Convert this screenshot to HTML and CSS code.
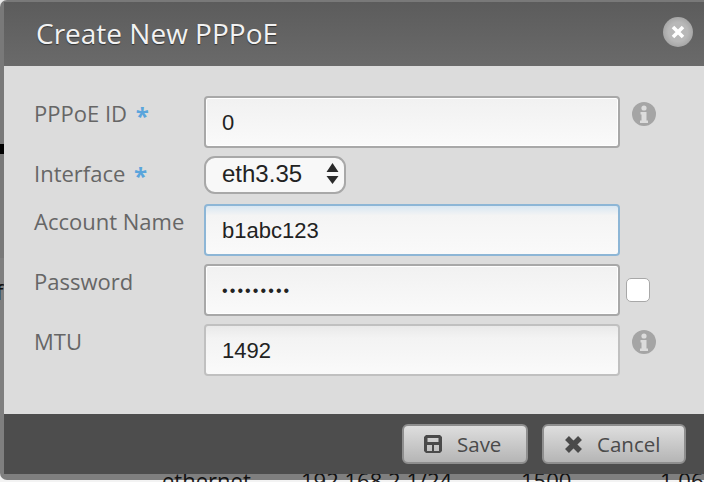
FILE: index.html
```html
<!DOCTYPE html>
<html lang="en">
  <head>
    <meta charset="UTF-8" />
    <meta name="viewport" content="width=device-width, initial-scale=1.0" />
    <title>Create New PPPoE</title>
    <link rel="stylesheet" href="styles.css">
  </head>
  <body>
    <div class="behind-top"></div>
    <div class="left-mark"></div>
    <span class="left-letter">f</span>
    <div class="behind">
      <span class="behind-cell cell-type">ethernet</span>
      <span class="behind-cell cell-ip">192.168.2.1/24</span>
      <span class="behind-cell cell-mtu">1500</span>
      <span class="behind-cell cell-rx">1.06</span>
    </div>
    <div class="dialog">
      <div class="dialog-head">
        <h1>Create New PPPoE</h1>
        <div class="close">
          <svg width="16" height="16" viewBox="0 0 16 16"><path d="M3 3l10 10M13 3L3 13" stroke="#fff" stroke-width="3.6" /></svg>
        </div>
      </div>
      <div class="dialog-body">
        <div class="row row-tall">
          <label>PPPoE ID <b>*</b></label>
          <div class="field">0</div>
          <svg class="info" width="24" height="24" viewBox="0 0 24 24"><circle cx="12" cy="12" r="12" fill="#a5a5a5" /><circle cx="12" cy="6" r="2.6" fill="#dcdcdc" /><path d="M8.500 10h6v8.500h1.500V21H8v-2.500h1.500V12.500h-1z" fill="#dcdcdc" /></svg>
        </div>
        <div class="row row-select">
          <label>Interface <b>*</b></label>
          <div class="select">eth3.35
            <svg width="13" height="22" viewBox="0 0 13 22"><path d="M6.500 0l6 9H.500zM6.500 21l-6-8h12z" fill="#2b2b2b" /></svg>
          </div>
        </div>
        <div class="row row-tall">
          <label>Account Name</label>
          <div class="field focus">b1abc123</div>
        </div>
        <div class="row row-tall">
          <label>Password</label>
          <div class="field dots">•••••••••</div>
          <div class="check"></div>
        </div>
        <div class="row row-tall">
          <label>MTU</label>
          <div class="field faded">1492</div>
          <svg class="info" width="24" height="24" viewBox="0 0 24 24"><circle cx="12" cy="12" r="12" fill="#a5a5a5" /><circle cx="12" cy="6" r="2.6" fill="#dcdcdc" /><path d="M8.500 10h6v8.500h1.500V21H8v-2.500h1.500V12.500h-1z" fill="#dcdcdc" /></svg>
        </div>
      </div>
      <div class="dialog-foot">
        <div class="btn btn-save">
          <svg width="18" height="18" viewBox="0 0 18 18"><path fill-rule="evenodd" d="M2 0h14l2 2v14l-2 2H2l-2-2V2zM3.500 3v4h11V3zM3 10v6h5v-6zM10 10v6h5v-6z" fill="#4a4a4a" /></svg>
          Save
        </div>
        <div class="btn btn-cancel">
          <svg width="19" height="19" viewBox="0 0 19 19"><path d="M3 3l13 13M16 3L3 16" stroke="#4a4a4a" stroke-width="5.500" /></svg>
          Cancel
        </div>
      </div>
    </div>
  </body>
</html>
```

FILE: styles.css
```css
* {
  margin: 0;
  padding: 0;
  box-sizing: border-box;
}
html,
body {
  height: 482px;
  overflow: hidden;
}
body {
  position: relative;
  background: #f3f3f3;
  font-family: "Open Sans", sans-serif;
}
.behind-top {
  height: 258px;
  background: #e8e8e8;
}
.behind {
  position: absolute;
  left: 0;
  right: 0;
  top: 468px;
  height: 14px;
  color: #222;
  font-size: 22px;
  line-height: 24px;
}
.behind-cell {
  position: absolute;
  top: 0;
}
.cell-type {
  left: 162px;
}
.cell-ip {
  left: 301px;
}
.cell-mtu {
  left: 521px;
}
.cell-rx {
  left: 660px;
}
.left-mark {
  position: absolute;
  left: 0;
  top: 144px;
  width: 4px;
  height: 10px;
  background: #000;
}
.left-letter {
  position: absolute;
  left: -4px;
  top: 276px;
  color: #222;
  font-size: 22px;
}
.dialog {
  position: absolute;
  left: 0;
  top: 0;
  width: 712px;
  height: 480px;
  padding: 2px 4px 6px;
  display: flex;
  flex-direction: column;
  background: rgba(0, 0, 0, 0.48);
  border-radius: 7px;
}
.dialog-head {
  height: 64px;
  padding: 0 15px 0 32px;
  display: flex;
  align-items: center;
  justify-content: space-between;
  background: linear-gradient(#5c5c5c, #6a6a6a);
}
.dialog-head h1 {
  margin-top: -2px;
  color: #f2f2f2;
  font-size: 28px;
  font-weight: 400;
  text-shadow: 0 1px 1px #333;
}
.close {
  width: 30px;
  height: 30px;
  margin-top: -4px;
  display: flex;
  align-items: center;
  justify-content: center;
  border-radius: 50%;
  background: radial-gradient(#b8b8b8 45%, #929292 100%);
}
.dialog-body {
  flex: 1;
  padding: 30px 0 0 30px;
  display: flex;
  flex-direction: column;
  gap: 8px;
  background: #dcdcdc;
}
.row {
  display: flex;
  align-items: flex-start;
}
.row-tall {
  height: 52px;
}
.row-select {
  height: 38px;
  margin-bottom: 2px;
}
.row label {
  width: 170px;
  color: #666;
  font-size: 22px;
  line-height: 34px;
}
.row label b {
  margin-left: 3px;
  color: #5aa5dc;
  font-size: 24px;
  font-weight: 700;
  line-height: 20px;
  vertical-align: -3px;
}
.field {
  width: 416px;
  height: 52px;
  padding-left: 16px;
  border: 2px solid #a8a8a8;
  border-radius: 4px;
  box-shadow: inset 0 0 0 1px #fff;
  background: linear-gradient(#f1f1f1, #fafafa);
  color: #222;
  font-family: "Liberation Sans", sans-serif;
  font-size: 22px;
  line-height: 49px;
}
.field.focus {
  border-color: #8db6d6;
  box-shadow: none;
  background: linear-gradient(#d9e7f2, #f4f4f4 20%, #fafafa);
}
.field.faded {
  border-color: #c0c0c0;
  box-shadow: none;
  background: linear-gradient(#e9e9e9, #f3f3f3 25%, #fafafa);
}
.field.dots {
  font-size: 16px;
  letter-spacing: 2.1px;
}
.info {
  margin: 6px 0 0 12px;
}
.select {
  width: 142px;
  height: 38px;
  padding: 0 5px 2px 16px;
  display: flex;
  align-items: center;
  justify-content: space-between;
  border: 2px solid #a8a8a8;
  border-radius: 11px;
  background: #f8f8f8;
  color: #222;
  font-family: "Liberation Sans", sans-serif;
  font-size: 24px;
}
.check {
  width: 24px;
  height: 24px;
  margin: 14px 0 0 6px;
  border: 1px solid #a8a8a8;
  border-radius: 5px;
  background: #fff;
}
.dialog-foot {
  height: 60px;
  padding-right: 22px;
  display: flex;
  align-items: center;
  justify-content: flex-end;
  gap: 14px;
  background: #4d4d4d;
}
.btn {
  height: 40px;
  padding-left: 20px;
  display: flex;
  align-items: center;
  border: 2px solid #8e8e8e;
  border-radius: 6px;
  background: linear-gradient(#dedede, #b5b5b5);
  color: #4a4a4a;
  font-size: 20.5px;
}
.btn-save {
  width: 126px;
  gap: 15px;
}
.btn-cancel {
  width: 144px;
  gap: 14px;
}
```
